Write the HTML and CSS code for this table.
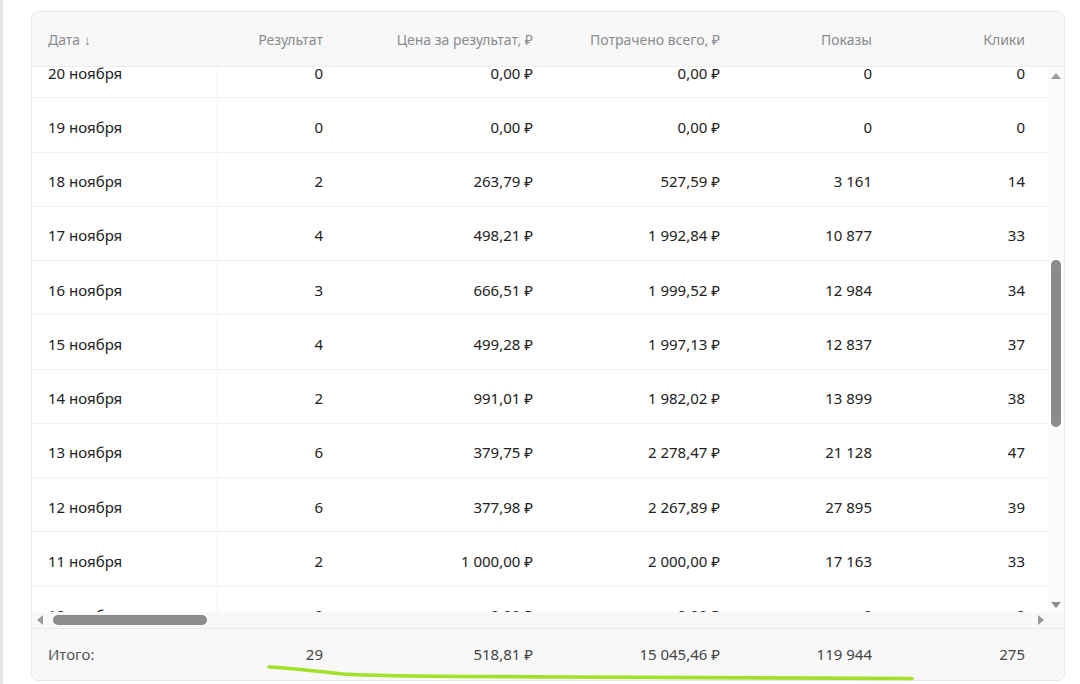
FILE: index.html
```html
<!DOCTYPE html>
<html lang="ru">
<head>
<meta charset="utf-8">
<link rel="stylesheet" href="styles.css">
</head>
<body>
<div class="page">
  <div class="card">
    <div class="head row-grid">
      <div class="c c1">Дата ↓</div>
      <div class="c c2">Результат</div>
      <div class="c c3">Цена за результат, ₽</div>
      <div class="c c4">Потрачено всего, ₽</div>
      <div class="c c5">Показы</div>
      <div class="c c6">Клики</div>
    </div>
    <div class="scroller">
      <div class="viewport">
        <div class="rows">
          <div class="row row-grid"><div class="c c1">20 ноября</div><div class="c c2">0</div><div class="c c3">0,00 ₽</div><div class="c c4">0,00 ₽</div><div class="c c5">0</div><div class="c c6">0</div></div>
          <div class="row row-grid"><div class="c c1">19 ноября</div><div class="c c2">0</div><div class="c c3">0,00 ₽</div><div class="c c4">0,00 ₽</div><div class="c c5">0</div><div class="c c6">0</div></div>
          <div class="row row-grid"><div class="c c1">18 ноября</div><div class="c c2">2</div><div class="c c3">263,79 ₽</div><div class="c c4">527,59 ₽</div><div class="c c5">3 161</div><div class="c c6">14</div></div>
          <div class="row row-grid"><div class="c c1">17 ноября</div><div class="c c2">4</div><div class="c c3">498,21 ₽</div><div class="c c4">1 992,84 ₽</div><div class="c c5">10 877</div><div class="c c6">33</div></div>
          <div class="row row-grid"><div class="c c1">16 ноября</div><div class="c c2">3</div><div class="c c3">666,51 ₽</div><div class="c c4">1 999,52 ₽</div><div class="c c5">12 984</div><div class="c c6">34</div></div>
          <div class="row row-grid"><div class="c c1">15 ноября</div><div class="c c2">4</div><div class="c c3">499,28 ₽</div><div class="c c4">1 997,13 ₽</div><div class="c c5">12 837</div><div class="c c6">37</div></div>
          <div class="row row-grid"><div class="c c1">14 ноября</div><div class="c c2">2</div><div class="c c3">991,01 ₽</div><div class="c c4">1 982,02 ₽</div><div class="c c5">13 899</div><div class="c c6">38</div></div>
          <div class="row row-grid"><div class="c c1">13 ноября</div><div class="c c2">6</div><div class="c c3">379,75 ₽</div><div class="c c4">2 278,47 ₽</div><div class="c c5">21 128</div><div class="c c6">47</div></div>
          <div class="row row-grid"><div class="c c1">12 ноября</div><div class="c c2">6</div><div class="c c3">377,98 ₽</div><div class="c c4">2 267,89 ₽</div><div class="c c5">27 895</div><div class="c c6">39</div></div>
          <div class="row row-grid"><div class="c c1">11 ноября</div><div class="c c2">2</div><div class="c c3">1 000,00 ₽</div><div class="c c4">2 000,00 ₽</div><div class="c c5">17 163</div><div class="c c6">33</div></div>
          <div class="row row-grid"><div class="c c1">10 ноября</div><div class="c c2">0</div><div class="c c3">0,00 ₽</div><div class="c c4">0,00 ₽</div><div class="c c5">0</div><div class="c c6">0</div></div>
        </div>
      </div>
      <div class="vbar">
        <span class="arr arr-up"></span>
        <div class="vtrack"><div class="vthumb"></div></div>
        <span class="arr arr-down"></span>
      </div>
      <div class="hbar">
        <span class="arr arr-left"></span>
        <div class="htrack"><div class="hthumb"></div></div>
        <span class="arr arr-right"></span>
      </div>
      <div class="corner"></div>
    </div>
    <div class="foot row-grid">
      <div class="c c1">Итого:</div>
      <div class="c c2">29</div>
      <div class="c c3">518,81 ₽</div>
      <div class="c c4">15 045,46 ₽</div>
      <div class="c c5">119 944</div>
      <div class="c c6">275</div>
    </div>
  </div>
  <svg class="mark" width="1080" height="684" viewBox="0 0 1080 684">
    <path d="M266 667 C 290 668, 310 671, 340 674 C 390 677, 470 676, 560 677 C 700 678, 820 678, 909 678.5" fill="none" stroke="#a3e02a" stroke-width="3.6" stroke-linecap="round"/>
  </svg>
</div>
</body>
</html>
```

FILE: styles.css
```css
* { box-sizing: border-box; }
html, body { margin: 0; padding: 0; }
body {
  width: 1080px;
  height: 684px;
  background: #ffffff;
  font-family: "Noto Sans", "Open Sans", sans-serif;
  font-size: 14px;
  color: #222222;
  overflow: hidden;
}
.page {
  position: relative;
  width: 1080px;
  height: 684px;
  border-left: 3px solid #e6e6e6;
  padding: 11px 0 0 28px;
}
.card {
  width: 1034px;
  height: 670px;
  border: 1px solid #e7e7e7;
  border-radius: 8px;
  overflow: hidden;
  display: flex;
  flex-direction: column;
  background: #fff;
}
.row-grid {
  display: grid;
  grid-template-columns: 186px 121px 210px 187px 152px 153px 200px;
  align-items: center;
  white-space: nowrap;
}
.c { padding: 0 16px; }
.c1 { text-align: left; }
.c2, .c3, .c4, .c5, .c6 { text-align: right; }
.head {
  flex: 0 0 55px;
  background: #f8f8f8;
  color: #878c91;
  border-bottom: 1px solid #eeeeee;
}
.scroller {
  flex: 0 0 561px;
  display: grid;
  grid-template-columns: 1fr 16px;
  grid-template-rows: 545px 16px;
}
.viewport {
  overflow: hidden;
  background: #fff;
}
.rows { margin-top: -23px; font-size: 15px; }
.row {
  height: 54.25px;
  border-bottom: 1px solid #efefef;
  align-items: stretch;
}
.row .c { display: flex; align-items: center; padding-top: 4px; }
.row .c2, .row .c3, .row .c4, .row .c5, .row .c6 { justify-content: flex-end; }
.row .c1 { border-right: 1px solid #f3f3f3; }
.vbar {
  background: #fbfbfb;
  display: flex;
  flex-direction: column;
  align-items: center;
  padding: 6px 0 4px;
}
.vtrack { flex: 1; width: 10px; padding-top: 181px; }
.vthumb { width: 10px; height: 167px; border-radius: 5px; background: #8c8c8c; }
.hbar {
  background: #f8f8f8;
  display: flex;
  align-items: center;
  padding: 0 4px 0 5px;
}
.htrack { flex: 1; height: 10px; padding-left: 10px; }
.hthumb { width: 154px; height: 10px; border-radius: 5px; background: #8c8c8c; }
.corner { background: #f8f8f8; }
.arr { display: block; width: 0; height: 0; flex: 0 0 auto; }
.arr-up { border-left: 5px solid transparent; border-right: 5px solid transparent; border-bottom: 6px solid #9a9a9a; }
.arr-down { border-left: 5px solid transparent; border-right: 5px solid transparent; border-top: 6px solid #8f8f8f; }
.arr-left { border-top: 5px solid transparent; border-bottom: 5px solid transparent; border-right: 6px solid #9a9a9a; }
.arr-right { border-top: 5px solid transparent; border-bottom: 5px solid transparent; border-left: 6px solid #9a9a9a; }
.foot {
  flex: 1;
  background: #f8f8f8;
  border-top: 1px solid #ececec;
  color: #444444;
  font-size: 15px;
  padding-bottom: 1px;
}
.foot .c1 { color: #555555; }
.mark {
  position: absolute;
  left: 0;
  top: 0;
  pointer-events: none;
}
```
